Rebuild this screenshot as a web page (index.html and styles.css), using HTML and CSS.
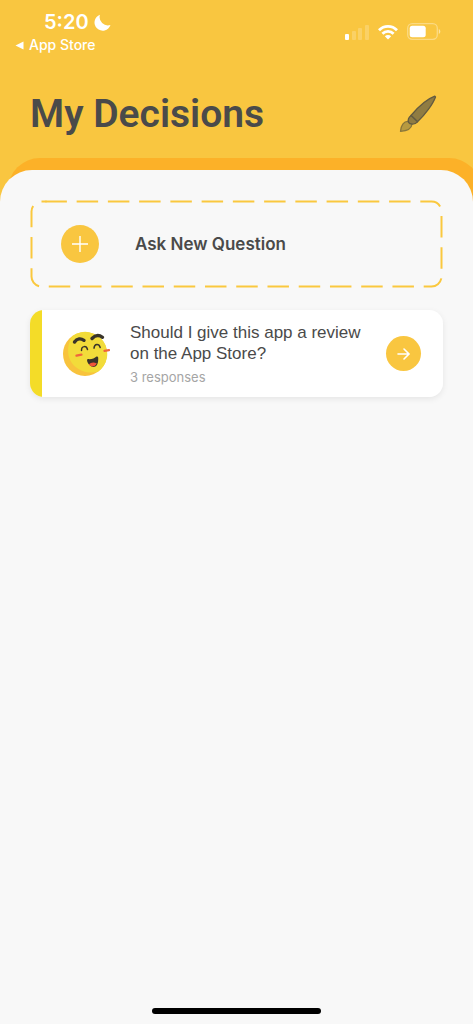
FILE: index.html
```html
<!DOCTYPE html>
<html lang="en">
<head>
<meta charset="utf-8">
<meta name="viewport" content="width=device-width, initial-scale=1">
<title>My Decisions</title>
<link rel="stylesheet" href="styles.css">
</head>
<body>
<div class="app">
  <div class="status">
    <div class="status-left">
      <div class="clock">
        <span>5:20</span>
        <svg class="moon" viewBox="0 0 17 17" aria-hidden="true"><path d="M6 .7A8.2 8.2 0 1 0 16.500 11 8.300 8.300 0 0 1 6 .7Z" fill="#fff"/></svg>
      </div>
      <a class="back" href="#"><svg class="back-arrow" viewBox="0 0 9 9" aria-hidden="true"><path d="M.5 4.500 8.500.500v8Z" fill="#fff"/></svg>App Store</a>
    </div>
    <div class="status-right">
      <svg class="signal" viewBox="0 0 24 16" aria-hidden="true" fill="#fff"><rect x="0" y="10" width="4" height="6" rx="1"/><g opacity=".2"><rect x="7" y="7" width="4" height="9" rx="1"/><rect x="13" y="4" width="4" height="12" rx="1"/><rect x="20" y="1" width="4" height="15" rx="1"/></g></svg>
      <svg class="wifi" viewBox="0 0 20 16" aria-hidden="true" fill="none" stroke="#fff" stroke-width="2.800"><path d="M1 6.200C6 1 14 1 19 6.200"/><path d="M4.400 9.700C7.500 6.700 12.500 6.700 15.600 9.700"/><path d="M10 15.500 6.800 12.300C8.600 10.700 11.400 10.700 13.200 12.300Z" fill="#fff" stroke="none"/></svg>
      <svg class="battery" viewBox="0 0 34 17" aria-hidden="true"><rect x=".7" y=".7" width="29.600" height="15.600" rx="4.500" fill="none" stroke="#fff" stroke-opacity=".35" stroke-width="1.300"/><rect x="2.700" y="2.700" width="16" height="11.600" rx="2.500" fill="#fff"/><path d="M31.800 6c2 .8 2 4.200 0 5Z" fill="#fff" opacity=".5"/></svg>
    </div>
  </div>
  <header class="header">
    <h1>My Decisions</h1>
    <button class="theme" type="button" aria-label="Change theme">
      <svg viewBox="0 0 38 38" aria-hidden="true" stroke-linejoin="round"><path d="M9.500 26.500C5 26 2 30 1.500 36.300 8 36 12.500 34 13 29Z" fill="#b79a40" stroke="#89763b" stroke-width="1.300"/><path d="M35.800 1.200C28 4 20 11 12 20.500L18.500 26.800C26 20 34 9 36.500 2Z" fill="#907c42" stroke="#635b41" stroke-width="1.300"/><path d="M12 20.500C9.500 22.500 8.800 25 9.500 27.300 11 29.700 16 29.700 18.500 26.800Z" fill="#907c42" stroke="#635b41" stroke-width="1.300"/></svg>
    </button>
  </header>
  <div class="sheet">
    <main class="panel">
      <button class="ask" type="button">
        <svg class="ask-border" aria-hidden="true"><rect class="ask-dash" x="1.500" y="1.500" rx="10" pathLength="996"/><rect class="ask-dash ask-dash-start" x="1.500" y="1.500" rx="10"/></svg>
        <span class="plus"><svg viewBox="0 0 16 16" aria-hidden="true"><path d="M8 0v16M0 8h16" stroke="#fff" stroke-width="1.400"/></svg></span>
        <span class="ask-label">Ask New Question</span>
      </button>
      <article class="card">
        <svg class="face" viewBox="0 0 48 46" aria-hidden="true">
          <circle cx="23" cy="23" r="22" fill="#f8c33d"/>
          <path d="M10.500 4.900A22 22 0 0 1 36 40.800C18 45 1 31 7.500 11Q8.500 7.500 10.500 4.900Z" fill="#f2dc3a"/>
          <g fill="none" stroke-linecap="round">
            <path d="M12.500 11C15 7.300 19 7.300 22 9.300" stroke="#39342a" stroke-width="3.400"/>
            <path d="M30 7.500C33 4.300 37 3.800 40.500 6.300" stroke="#39342a" stroke-width="3.400"/>
            <path d="M19.500 19.500C19.500 14.500 24.500 14.500 25.500 18.500M32 17.200C32.500 12.500 37 12.500 38.200 16.500" stroke="#39342a" stroke-width="1.500"/>
            <path d="M14.500 24.700 19.500 23.700M42.500 19.900 47 19.100" stroke="#f0663d" stroke-width="2.200"/>
          </g>
          <path d="M26 28C29 28.500 32.500 27.500 34.500 25.500 36 25 36.500 26 36.200 29 36 36.500 31 37.500 27.500 34 25 31.500 24.300 28 26 28Z" fill="#39342a"/>
          <path d="M26.800 33.300Q30.500 30 34.800 32.500C32.500 36.500 29.500 36.300 26.800 33.300Z" fill="#f2553a"/>
        </svg>
        <div class="card-text">
          <h2>Should I give this app a review on the App Store?</h2>
          <p>3 responses</p>
        </div>
        <button class="open" type="button" aria-label="Open question"><svg viewBox="0 0 14 14" aria-hidden="true" fill="none" stroke="#fff" stroke-width="1.600"><path d="M1 7h11M7 2l5 5-5 5" stroke-linecap="round"/></svg></button>
      </article>
      <div class="home-bar"></div>
    </main>
  </div>
</div>
</body>
</html>
```
FILE: styles.css
```css
* { box-sizing: border-box; }
body { margin: 0; font-family: Inter, "Liberation Sans", sans-serif; color: #4a4a4a; background: #f9c640; }
h1, h2, p { margin: 0; }
button { border: 0; padding: 0; background: none; font: inherit; color: inherit; cursor: pointer; }
svg { display: block; }
.app { min-height: 100vh; display: flex; flex-direction: column; background: #f9c640; overflow: hidden; }
.status { display: flex; justify-content: space-between; align-items: flex-start; padding: 10px 32px 0 15px; color: #fff; }
.clock { display: flex; align-items: center; gap: 5px; padding-left: 29px; font-size: 20px; line-height: 24px; font-weight: 600; }
.moon { width: 17px; height: 17px; }
.back { display: flex; align-items: center; gap: 5px; margin-top: 2px; color: #fff; font-size: 14px; line-height: 18px; font-weight: 500; text-decoration: none; }
.back-arrow { width: 9px; height: 9px; }
.status-right { display: flex; align-items: center; gap: 9px; padding-top: 13px; }
.signal { width: 24px; height: 16px; }
.wifi { width: 20px; height: 16px; }
.battery { width: 34px; height: 17px; }
.header { display: flex; justify-content: space-between; align-items: center; padding: 36px 36px 20px 30px; }
h1 { font-family: Roboto, "Liberation Sans", sans-serif; font-size: 39px; line-height: 48px; font-weight: 600; }
.theme svg { width: 38px; height: 38px; fill: none; }
.sheet { position: relative; flex: 1; display: flex; padding-top: 12px; }
.sheet::before { content: ""; position: absolute; inset: 0 -8px 0 8px; border-radius: 32px 32px 0 0; background: #fcb128; }
.panel { position: relative; flex: 1; display: flex; flex-direction: column; gap: 22px; padding: 30px 30px 10px; border-radius: 32px 32px 0 0; background: #f8f8f8; }
.ask { position: relative; display: flex; align-items: center; gap: 36px; min-height: 88px; padding: 0 31px; }
.ask-border { position: absolute; inset: 0; width: 100%; height: 100%; overflow: visible; }
.ask-dash { width: calc(100% - 3px); height: calc(100% - 3px); fill: none; stroke: #fac83e; stroke-width: 2px; stroke-dasharray: 22px 10px; stroke-dashoffset: -4px; }
.ask-dash-start { stroke-dasharray: 5px 4000px; stroke-dashoffset: 0; }
.plus { flex: none; display: grid; place-items: center; width: 38px; height: 38px; border-radius: 50%; background: #f9c640; }
.plus svg { width: 16px; height: 16px; }
.ask-label { font-size: 17px; line-height: 24px; font-weight: 600; }
.card { display: flex; align-items: center; min-height: 87px; padding: 11px 22px 11px 32px; border-radius: 14px; background: linear-gradient(90deg, #f4dc28 12px, #fff 12px); box-shadow: 0 2px 6px rgba(0, 0, 0, .08); }
.face { flex: none; width: 48px; height: 46px; margin-right: 20px; }
.card-text { flex: 1; min-width: 0; }
h2 { padding-right: 12px; font-family: "Liberation Sans", sans-serif; font-size: 17px; line-height: 21px; font-weight: 400; }
.card-text p { margin-top: 4px; font-size: 13px; line-height: 18px; color: #a5a5a5; }
.open { flex: none; display: grid; place-items: center; width: 35px; height: 35px; border-radius: 50%; background: #f9c640; }
.open svg { width: 14px; height: 14px; }
.home-bar { align-self: center; width: 169px; height: 6px; margin-top: auto; border-radius: 3px; background: #000; }
```
